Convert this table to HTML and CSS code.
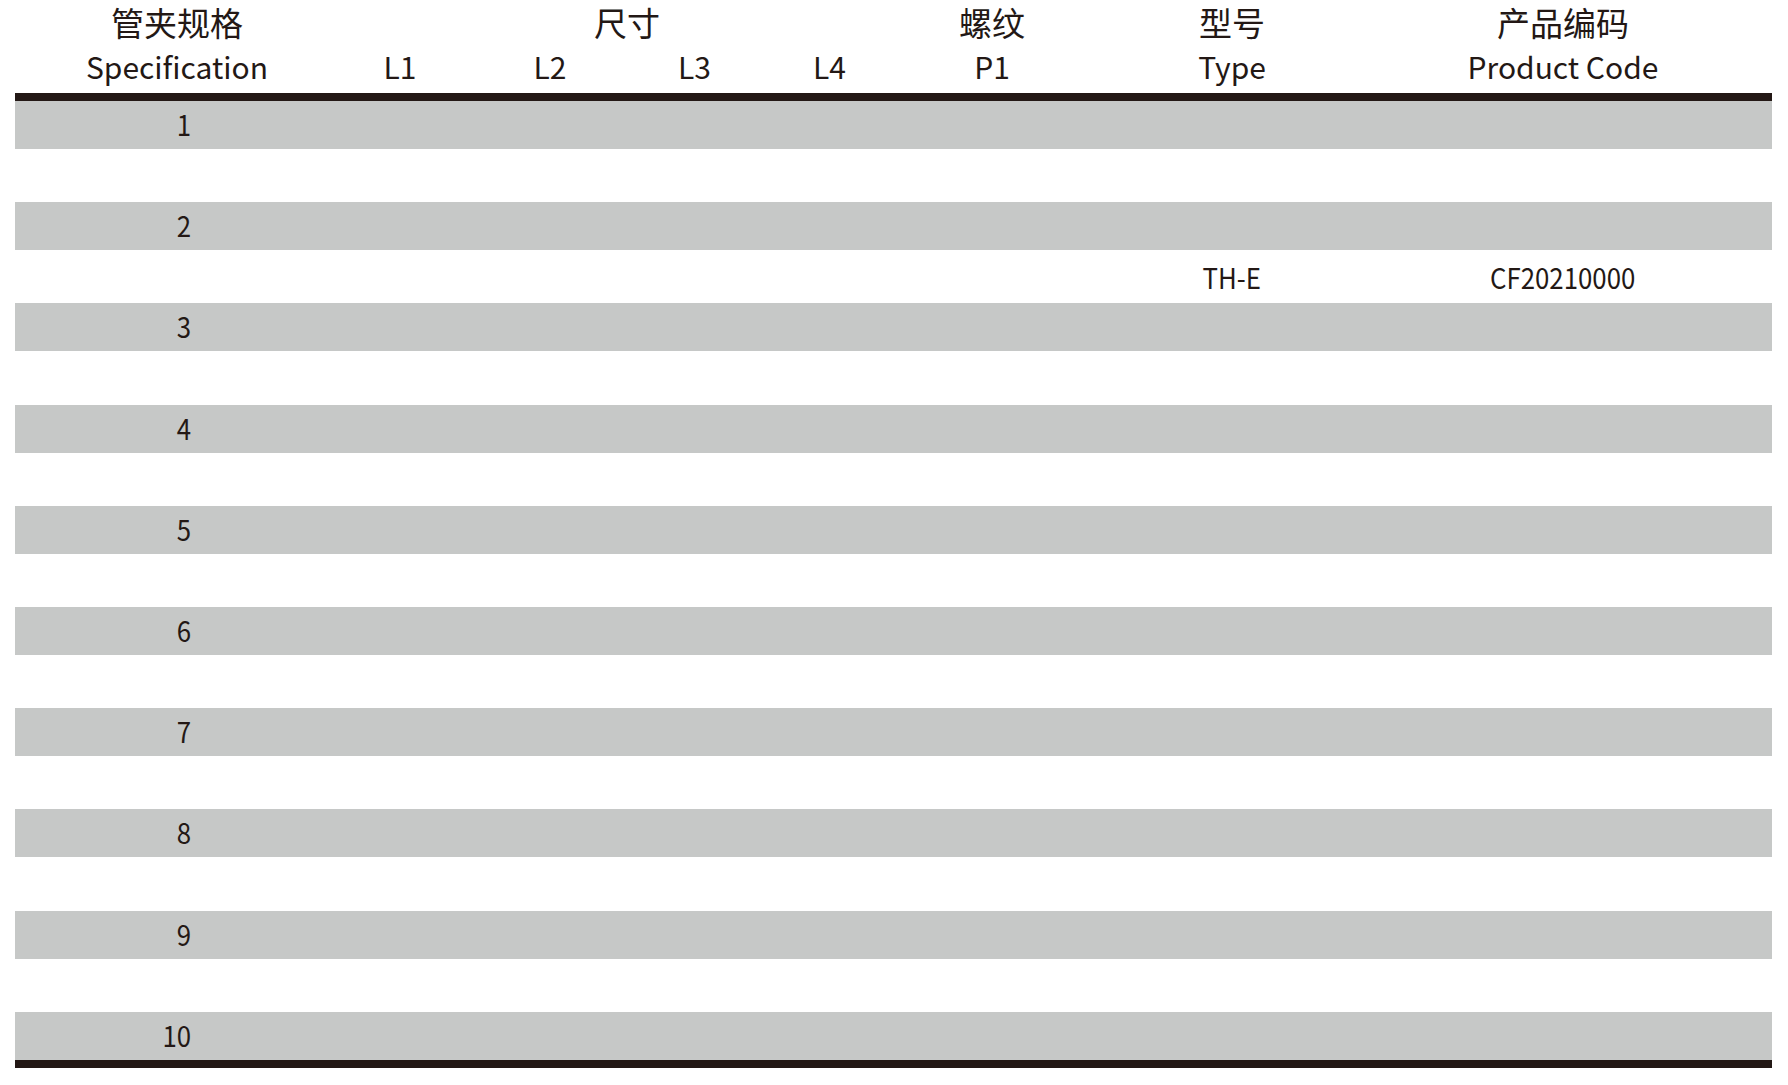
FILE: index.html
```html
<!DOCTYPE html>
<html lang="zh">
<head>
<meta charset="utf-8">
<title>管夹规格</title>
<link rel="stylesheet" href="styles.css">
</head>
<body>
<div class="sheet">
  <div class="head">
    <div class="h cn c1">管夹规格</div>
    <div class="h cn span-size">尺寸</div>
    <div class="h cn c6">螺纹</div>
    <div class="h cn c7">型号</div>
    <div class="h cn c8">产品编码</div>
    <div class="h en c1">Specification</div>
    <div class="h en c2">L1</div>
    <div class="h en c3">L2</div>
    <div class="h en c4">L3</div>
    <div class="h en c5">L4</div>
    <div class="h en c6">P1</div>
    <div class="h en c7">Type</div>
    <div class="h en c8">Product Code</div>
  </div>
  <div class="body">
    <div class="row gray"><div class="num"><span class="t">1</span></div></div>
    <div class="row white"></div>
    <div class="row gray"><div class="num"><span class="t">2</span></div></div>
    <div class="row white"><div class="cell c7"><span class="t">TH-E</span></div><div class="cell c8"><span class="t">CF20210000</span></div></div>
    <div class="row gray"><div class="num"><span class="t">3</span></div></div>
    <div class="row white"></div>
    <div class="row gray"><div class="num"><span class="t">4</span></div></div>
    <div class="row white"></div>
    <div class="row gray"><div class="num"><span class="t">5</span></div></div>
    <div class="row white"></div>
    <div class="row gray"><div class="num"><span class="t">6</span></div></div>
    <div class="row white"></div>
    <div class="row gray"><div class="num"><span class="t">7</span></div></div>
    <div class="row white"></div>
    <div class="row gray"><div class="num"><span class="t">8</span></div></div>
    <div class="row white"></div>
    <div class="row gray"><div class="num"><span class="t">9</span></div></div>
    <div class="row white"></div>
    <div class="row gray"><div class="num"><span class="t">10</span></div></div>
  </div>
</div>
</body>
</html>
```
FILE: styles.css
```css
html, body {
  margin: 0;
  padding: 0;
  background: #ffffff;
}

body {
  font-family: "Noto Sans CJK SC", "Noto Sans", sans-serif;
  color: #231815;
}

.sheet {
  width: 1757px;
  margin-left: 15px;
}

.head,
.row {
  display: grid;
  grid-template-columns: 324px 122px 178px 111px 159px 166px 314px 348px 35px;
}

.head {
  grid-template-rows: 44px 41px;
  padding-top: 2px;
  padding-bottom: 6px;
  border-bottom: 8px solid #231815;
}

.h {
  line-height: 41px;
  text-align: center;
  white-space: nowrap;
}

.cn {
  grid-row: 1;
  font-size: 33px;
}

.en {
  grid-row: 2;
  font-size: 30px;
}

.c1 { grid-column: 1; }
.c2 { grid-column: 2; }
.c3 { grid-column: 3; }
.c4 { grid-column: 4; }
.c5 { grid-column: 5; }
.c6 { grid-column: 6; }
.c7 { grid-column: 7; }
.c8 { grid-column: 8; }
.span-size { grid-column: 2 / 6; padding-left: 6px; }

.body {
  border-bottom: 8px solid #231815;
}

.row.gray {
  height: 48px;
  background: #c6c8c7;
}

.row.white {
  height: 53.2px;
  background: #ffffff;
}

.num,
.cell {
  font-size: 29px;
  white-space: nowrap;
}

.t {
  display: inline-block;
  transform: scaleX(0.89);
}

.num {
  grid-column: 1;
  text-align: right;
  line-height: 44px;
  padding-right: 148px;
}

.num .t {
  transform-origin: right center;
}

.cell {
  text-align: center;
  line-height: 52px;
}
```
